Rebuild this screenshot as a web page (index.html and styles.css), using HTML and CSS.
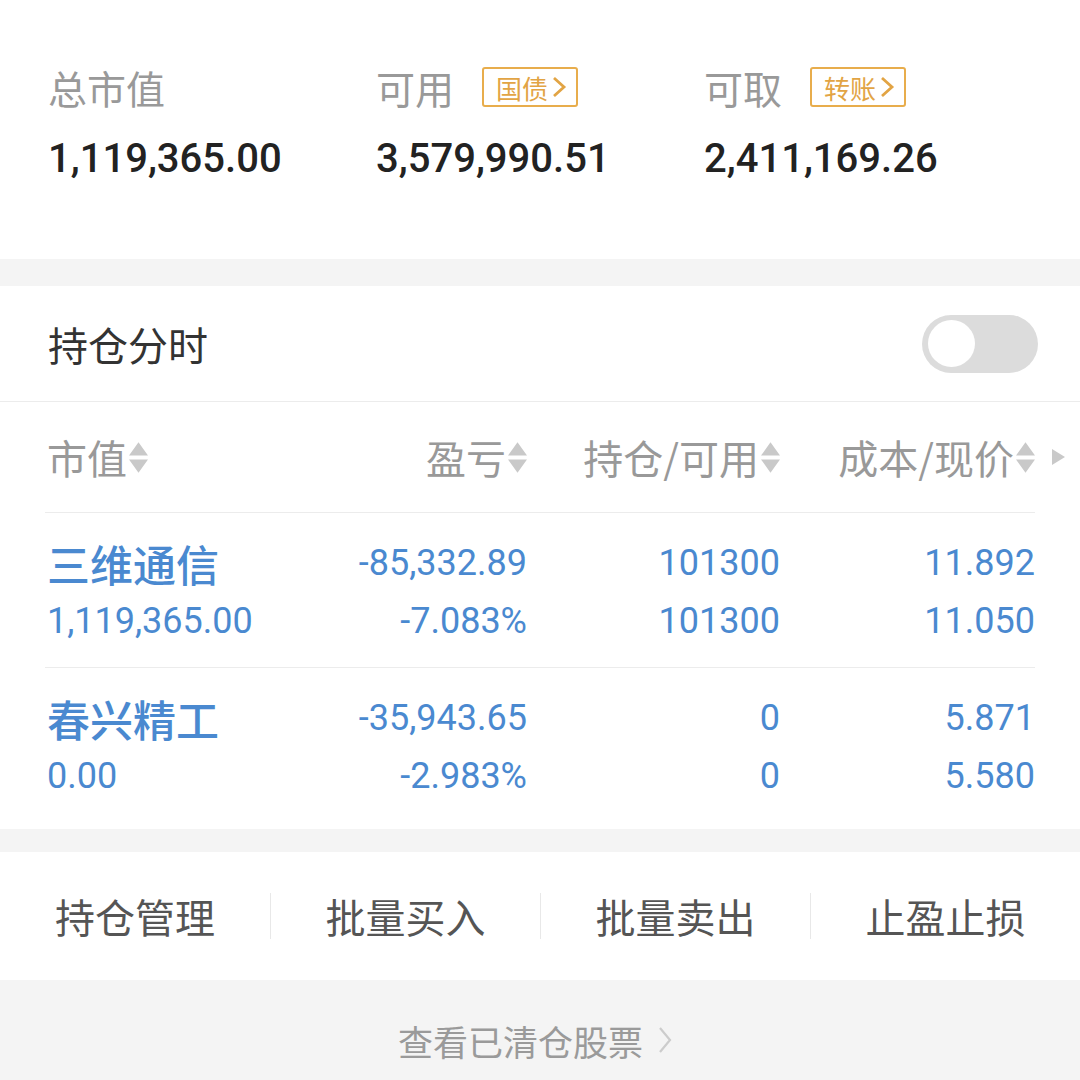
FILE: index.html
```html
<!DOCTYPE html>
<html lang="zh-CN">
<head>
<meta charset="utf-8">
<title>持仓</title>
<link rel="stylesheet" href="styles.css">
</head>
<body>
<section class="summary">
  <div class="stat">
    <div class="stat-label"><span>总市值</span></div>
    <div class="stat-value">1,119,365.00</div>
  </div>
  <div class="stat">
    <div class="stat-label"><span>可用</span><span class="tag">国债<svg class="tag-chev" viewBox="0 0 16 24"><path d="M3 3 L13 12 L3 21" /></svg></span></div>
    <div class="stat-value">3,579,990.51</div>
  </div>
  <div class="stat">
    <div class="stat-label"><span>可取</span><span class="tag">转账<svg class="tag-chev" viewBox="0 0 16 24"><path d="M3 3 L13 12 L3 21" /></svg></span></div>
    <div class="stat-value">2,411,169.26</div>
  </div>
</section>

<section class="holdings">
  <div class="toggle-row">
    <span class="toggle-title">持仓分时</span>
    <span class="switch"><span class="knob"></span></span>
  </div>
  <div class="table">
    <div class="thead">
      <div class="th th-left">市值<svg class="sort" viewBox="0 0 20 32"><path d="M0 14 L10 0 L20 14 Z M0 18 L10 32 L20 18 Z"/></svg></div>
      <div class="th">盈亏<svg class="sort" viewBox="0 0 20 32"><path d="M0 14 L10 0 L20 14 Z M0 18 L10 32 L20 18 Z"/></svg></div>
      <div class="th">持仓/可用<svg class="sort" viewBox="0 0 20 32"><path d="M0 14 L10 0 L20 14 Z M0 18 L10 32 L20 18 Z"/></svg></div>
      <div class="th th-last">成本/现价<svg class="sort" viewBox="0 0 20 32"><path d="M0 14 L10 0 L20 14 Z M0 18 L10 32 L20 18 Z"/></svg><svg class="more" viewBox="0 0 13 16"><path d="M0 0 L13 8 L0 16 Z"/></svg></div>
    </div>
    <div class="trow">
      <div class="td td-left"><span class="name">三维通信</span><span>1,119,365.00</span></div>
      <div class="td"><span>-85,332.89</span><span>-7.083%</span></div>
      <div class="td"><span>101300</span><span>101300</span></div>
      <div class="td"><span>11.892</span><span>11.050</span></div>
    </div>
    <div class="trow">
      <div class="td td-left"><span class="name">春兴精工</span><span>0.00</span></div>
      <div class="td"><span>-35,943.65</span><span>-2.983%</span></div>
      <div class="td"><span>0</span><span>0</span></div>
      <div class="td"><span>5.871</span><span>5.580</span></div>
    </div>
  </div>
</section>

<nav class="actions">
  <div class="action">持仓管理</div>
  <div class="action">批量买入</div>
  <div class="action">批量卖出</div>
  <div class="action">止盈止损</div>
</nav>

<div class="cleared">
  <span>查看已清仓股票</span>
  <svg class="cleared-chev" viewBox="0 0 14 28"><path d="M2 2 L12 14 L2 26"/></svg>
</div>
</body>
</html>
```

FILE: styles.css
```css
html, body {
  margin: 0;
  padding: 0;
}
body {
  width: 1080px;
  height: 1080px;
  overflow: hidden;
  background: #f4f4f4;
  font-family: Roboto, "Noto Sans CJK SC", sans-serif;
}

/* summary */
.summary {
  background: #fff;
  height: 259px;
  box-sizing: border-box;
  padding: 62px 0 0 48px;
  display: grid;
  grid-template-columns: 328px 328px 1fr;
}
.stat-label {
  display: flex;
  align-items: center;
  height: 50px;
  font-size: 39px;
  color: #999;
  font-family: "Noto Sans CJK SC", sans-serif;
}
.tag {
  display: inline-flex;
  align-items: center;
  box-sizing: border-box;
  height: 40px;
  margin-left: 28px;
  padding: 0 9px 0 12px;
  border: 2px solid #e8ad4c;
  border-radius: 3px;
  font-size: 26px;
  color: #e2a444;
  gap: 3px;
}
.tag-chev {
  width: 16px;
  height: 24px;
  fill: none;
  stroke: #e2a444;
  stroke-width: 2.8;
}
.stat-value {
  margin-top: 22px;
  height: 50px;
  line-height: 50px;
  font-size: 40px;
  color: #222;
  font-weight: 500;
}

/* holdings card */
.holdings {
  background: #fff;
  margin-top: 27px;
  padding-bottom: 7px;
}
.toggle-row {
  height: 116px;
  box-sizing: border-box;
  display: flex;
  align-items: center;
  justify-content: space-between;
  padding: 0 42px 0 48px;
  border-bottom: 1px solid #ececec;
}
.toggle-title {
  font-size: 40px;
  color: #333;
  font-family: "Noto Sans CJK SC", sans-serif;
}
.switch {
  width: 116px;
  height: 58px;
  border-radius: 29px;
  background: #dcdcdc;
  display: flex;
  align-items: center;
  padding-left: 6px;
  box-sizing: border-box;
}
.knob {
  width: 47px;
  height: 47px;
  border-radius: 50%;
  background: #fff;
}

.table {
  padding: 0 45px;
}
.thead, .trow {
  display: grid;
  grid-template-columns: 255px 227px 253px 1fr;
}
.thead {
  height: 110px;
  align-items: center;
  border-bottom: 1px solid #ececec;
}
.th {
  display: flex;
  align-items: center;
  justify-content: flex-end;
  font-size: 40px;
  color: #999;
  font-family: "Noto Sans CJK SC", sans-serif;
}
.th-left {
  justify-content: flex-start;
  padding-left: 2px;
}
.th-last {
  position: relative;
}
.sort {
  width: 19px;
  height: 31px;
  margin-left: 2px;
  fill: #c9c9c9;
}
.more {
  position: absolute;
  right: -30px;
  top: 50%;
  margin-top: -8px;
  width: 13px;
  height: 16px;
  fill: #c9c9c9;
}

.trow {
  padding: 21px 0 17px;
  border-bottom: 1px solid #ececec;
}
.trow:last-child {
  border-bottom: none;
}
.td {
  display: flex;
  flex-direction: column;
  align-items: flex-end;
  font-size: 36px;
  line-height: 58px;
  color: #4a89d0;
}
.td-left {
  align-items: flex-start;
  padding-left: 2px;
}
.name {
  font-family: "Noto Sans CJK SC", sans-serif;
  font-size: 43px;
  font-weight: 500;
}

/* actions */
.actions {
  margin-top: 23px;
  height: 128px;
  background: #fff;
  display: grid;
  grid-template-columns: repeat(4, 1fr);
  align-items: center;
}
.action {
  height: 46px;
  display: flex;
  align-items: center;
  justify-content: center;
  font-size: 40px;
  color: #555;
  font-family: "Noto Sans CJK SC", sans-serif;
  border-left: 1px solid #e8e8e8;
}
.action:first-child {
  border-left: none;
}

/* cleared link */
.cleared {
  display: flex;
  justify-content: center;
  align-items: center;
  gap: 15px;
  padding-top: 36px;
  padding-right: 10px;
  height: 48px;
  font-size: 35px;
  color: #9a9a9a;
  font-family: "Noto Sans CJK SC", sans-serif;
}
.cleared-chev {
  width: 14px;
  height: 28px;
  fill: none;
  stroke: #cccccc;
  stroke-width: 2.2;
}
```
